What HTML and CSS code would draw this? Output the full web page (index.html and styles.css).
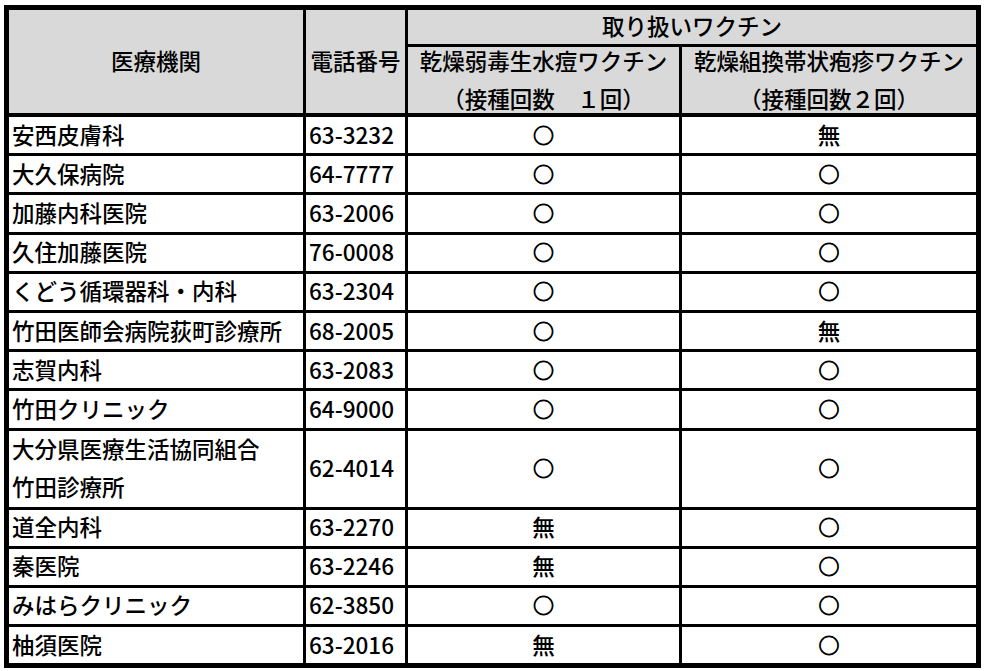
FILE: index.html
```html
<!DOCTYPE html>
<html lang="ja">
<head>
<meta charset="utf-8">
<title>取り扱いワクチン一覧</title>
<link rel="stylesheet" href="styles.css">
</head>
<body>
<div class="sheet">
  <div class="cell head span-rows name-h">医療機関</div>
  <div class="cell head span-rows tel-h">電話番号</div>
  <div class="cell head top-h">取り扱いワクチン</div>
  <div class="cell head sub-h">乾燥弱毒生水痘ワクチン<br>（接種回数　１回）</div>
  <div class="cell head sub-h">乾燥組換帯状疱疹ワクチン<br>（接種回数２回）</div>

  <div class="cell name">安西皮膚科</div><div class="cell tel">63-3232</div><div class="cell mark o">○</div><div class="cell mark">無</div>
  <div class="cell name">大久保病院</div><div class="cell tel">64-7777</div><div class="cell mark o">○</div><div class="cell mark o">○</div>
  <div class="cell name">加藤内科医院</div><div class="cell tel">63-2006</div><div class="cell mark o">○</div><div class="cell mark o">○</div>
  <div class="cell name">久住加藤医院</div><div class="cell tel">76-0008</div><div class="cell mark o">○</div><div class="cell mark o">○</div>
  <div class="cell name">くどう循環器科・内科</div><div class="cell tel">63-2304</div><div class="cell mark o">○</div><div class="cell mark o">○</div>
  <div class="cell name">竹田医師会病院荻町診療所</div><div class="cell tel">68-2005</div><div class="cell mark o">○</div><div class="cell mark">無</div>
  <div class="cell name">志賀内科</div><div class="cell tel">63-2083</div><div class="cell mark o">○</div><div class="cell mark o">○</div>
  <div class="cell name">竹田クリニック</div><div class="cell tel">64-9000</div><div class="cell mark o">○</div><div class="cell mark o">○</div>
  <div class="cell name two">大分県医療生活協同組合<br>竹田診療所</div><div class="cell tel">62-4014</div><div class="cell mark o">○</div><div class="cell mark o">○</div>
  <div class="cell name">道全内科</div><div class="cell tel">63-2270</div><div class="cell mark">無</div><div class="cell mark o">○</div>
  <div class="cell name">秦医院</div><div class="cell tel">63-2246</div><div class="cell mark">無</div><div class="cell mark o">○</div>
  <div class="cell name">みはらクリニック</div><div class="cell tel">62-3850</div><div class="cell mark o">○</div><div class="cell mark o">○</div>
  <div class="cell name">柚須医院</div><div class="cell tel">63-2016</div><div class="cell mark">無</div><div class="cell mark o">○</div>
</div>
</body>
</html>
```

FILE: styles.css
```css
html, body {
  margin: 0;
  padding: 0;
  background: #ffffff;
}

body {
  padding: 5px 0 0 4px;
  font-family: "Noto Sans CJK JP", "Noto Sans", sans-serif;
  font-size: 22.5px;
  font-weight: 500;
  color: #000000;
}

.sheet {
  display: grid;
  width: fit-content;
  grid-template-columns: 294px 99px 271px 294px;
  grid-template-rows: 34px 67px repeat(8, 36.2px) 76px repeat(4, 36.2px);
  gap: 3px;
  padding: 5px;
  background: #000000;
}

.cell {
  background: #ffffff;
  display: flex;
  align-items: center;
  line-height: 38px;
  white-space: nowrap;
  min-width: 0;
  padding-bottom: 3px;
}

.head {
  background: #d9d9d9;
  justify-content: center;
  text-align: center;
}

.span-rows {
  grid-row: 1 / span 2;
  margin-bottom: 1px;
}

.top-h {
  grid-column: 3 / span 2;
  padding-bottom: 5px;
}

.sub-h {
  margin-bottom: 1px;
  padding-bottom: 2px;
}

.name {
  padding-left: 3px;
}

.tel {
  padding-left: 3px;
}

.mark {
  justify-content: center;
}

.o {
  font-size: 21px;
  -webkit-text-stroke: 0.8px #000000;
}
```
